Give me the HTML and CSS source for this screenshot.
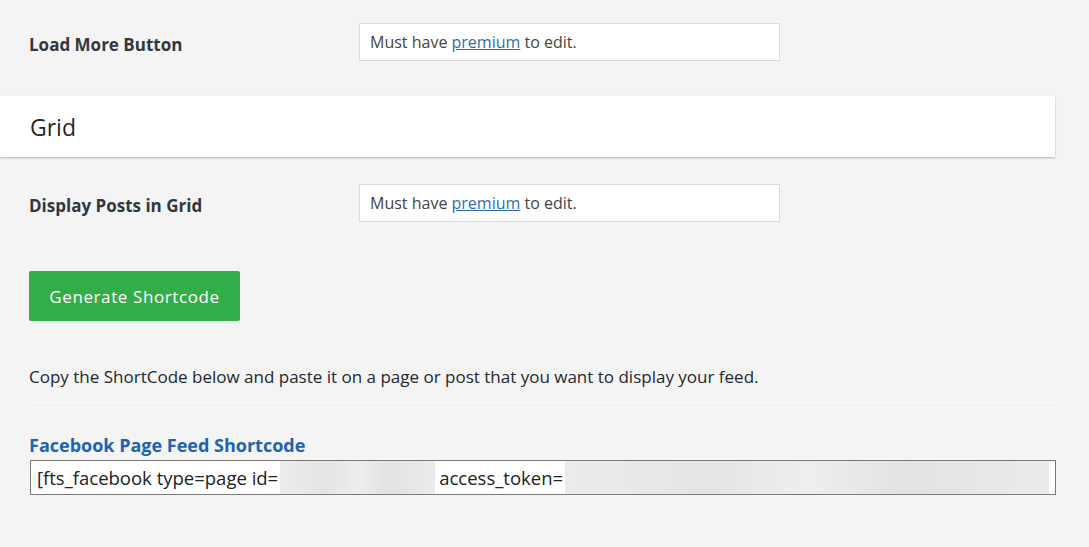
FILE: index.html
```html
<!DOCTYPE html>
<html>
<head>
<meta charset="utf-8">
<link rel="stylesheet" href="styles.css">
</head>
<body>
<div class="page">
  <div class="row first">
    <div class="label">Load More Button</div>
    <div class="field">Must have <a href="#">premium</a> to edit.</div>
  </div>
  <div class="section-head">Grid</div>
  <div class="row second">
    <div class="label">Display Posts in Grid</div>
    <div class="field">Must have <a href="#">premium</a> to edit.</div>
  </div>
  <div class="actions">
    <button class="btn">Generate Shortcode</button>
  </div>
  <p class="copy">Copy the ShortCode below and paste it on a page or post that you want to display your feed.</p>
  <div class="divider"></div>
  <h3 class="sc-title">Facebook Page Feed Shortcode</h3>
  <div class="sc-box">[fts_facebook type=page id=<span class="blur b1"></span> access_token=<span class="blur b2"></span></div>
</div>
</body>
</html>
```
FILE: styles.css
```css
* { box-sizing: border-box; }
body {
  margin: 0;
  background: #f4f4f4;
  font-family: "Open Sans", "Noto Sans", sans-serif;
  color: #32373c;
}
.page { padding-bottom: 40px; }
.row {
  display: flex;
  align-items: center;
  padding-left: 29px;
}
.row.first { padding-top: 23px; }
.row.second { margin-top: 27px; }
.label {
  width: 330px;
  padding-top: 4px;
  font-weight: 700;
  font-size: 17px;
  color: #32373c;
}
.field {
  width: 421px;
  height: 38px;
  background: #fff;
  border: 1px solid #dcdcdc;
  padding: 0 10px;
  line-height: 36px;
  font-size: 16px;
  color: #444;
  white-space: nowrap;
}
.field a {
  color: #2d6eaf;
  text-decoration: underline;
}
.section-head {
  margin-top: 35px;
  width: 1055px;
  height: 61px;
  background: #fff;
  box-shadow: 0 1px 2px rgba(0,0,0,0.25);
  display: flex;
  align-items: center;
  padding-left: 30px;
  font-size: 23px;
  color: #23282d;
}
.actions { padding-left: 29px; margin-top: 49px; }
.btn {
  width: 211px;
  height: 50px;
  background: #33ad48;
  border: none;
  border-radius: 2px;
  color: #fff;
  font-family: "Open Sans", "Noto Sans", sans-serif;
  font-size: 17px;
  letter-spacing: 0.6px;
  padding: 0;
}
.copy {
  margin: 44px 0 0 29px;
  font-size: 17px;
  line-height: 24px;
  color: #23282d;
}
.divider {
  margin: 13px 34px 0 29px;
  height: 1px;
  background: #fcfcfc;
}
.sc-title {
  margin: 30px 0 0 29px;
  font-size: 18px;
  line-height: 24px;
  font-weight: 700;
  color: #1e63b0;
}
.sc-box {
  margin: 3px 0 0 30px;
  width: 1026px;
  height: 35px;
  background: #fff;
  border: 1px solid #7a7a7a;
  padding: 0 6px;
  display: flex;
  align-items: center;
  font-size: 18.5px;
  color: #222;
  white-space: nowrap;
  overflow: hidden;
}
.blur {
  display: inline-block;
  height: 33px;
  background: linear-gradient(90deg, #ececec, #e5e5e5 30%, #eeeeee 50%, #e3e3e3 70%, #ebebeb);
}
.b1 { width: 156px; margin: 0 4px 0 2px; }
.b2 { width: 487px; margin-left: 2px; }
```
